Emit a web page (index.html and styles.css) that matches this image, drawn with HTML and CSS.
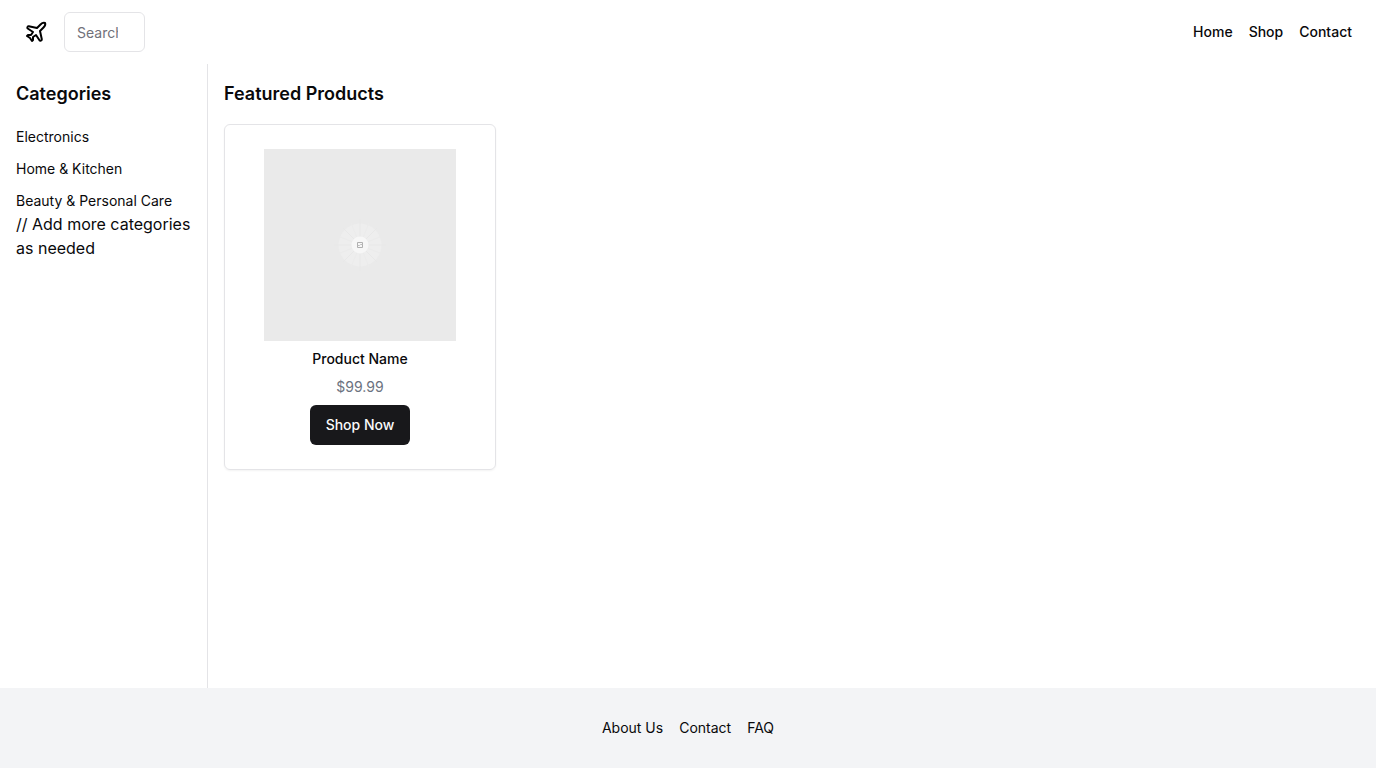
FILE: index.html
```html
<!DOCTYPE html>
<html lang="en">
<head>
  <meta charset="utf-8">
  <meta name="viewport" content="width=device-width, initial-scale=1">
  <title>Featured Products</title>
  <link rel="stylesheet" href="styles.css">
</head>
<body class="page">
  <header class="header">
    <div class="header-start">
      <a class="logo" href="#" aria-label="Store home">
        <svg class="logo-icon" viewBox="0 0 24 24" fill="none" stroke="currentColor" stroke-width="2" stroke-linecap="round" stroke-linejoin="round" aria-hidden="true">
          <path d="M17.8 19.2 16 11l3.5-3.5C21 6 21.5 4 21 3c-1-.5-3 0-4.5 1.5L13 8 4.8 6.2c-.5-.1-.9.1-1.1.5l-.3.5c-.2.5-.1 1 .3 1.3L9 12l-2 3H4l-1 1 3 2 2 3 1-1v-3l3-2 3.5 5.3c.3.4.8.5 1.3.3l.5-.2c.4-.3.6-.7.5-1.2z"/>
        </svg>
      </a>
      <input class="search" type="search" placeholder="Search..." aria-label="Search">
    </div>
    <nav class="nav" aria-label="Main">
      <a class="nav-link" href="#">Home</a>
      <a class="nav-link" href="#">Shop</a>
      <a class="nav-link" href="#">Contact</a>
    </nav>
  </header>

  <div class="body">
    <aside class="sidebar">
      <h2 class="heading">Categories</h2>
      <ul class="categories">
        <li><a class="link" href="#">Electronics</a></li>
        <li><a class="link" href="#">Home &amp; Kitchen</a></li>
        <li><a class="link" href="#">Beauty &amp; Personal Care</a></li>
      </ul>
      <p class="note">// Add more categories as needed</p>
    </aside>

    <main class="main">
      <h2 class="heading">Featured Products</h2>
      <div class="products">
        <article class="card">
          <svg class="card-image" viewBox="0 0 192 192" role="img" aria-label="Product image">
            <rect width="192" height="192" fill="#eaeaea"/>
            <circle cx="96" cy="96" r="21.500" fill="#eeeeee"/>
            <g fill="none" stroke="#e8e8e8" stroke-width="1">
              <path d="M70 96H122M96 70V122M79 79 113 113M113 79 79 113"/>
              <path d="M87 74 105 118M105 74 87 118M74 87 118 105M74 105 118 87" stroke="#ebebeb"/>
            </g>
            <circle cx="96" cy="96" r="8.500" fill="#f7f7f7"/>
            <g fill="none" stroke="#b0b0b0" stroke-width="1">
              <path d="M93.500 93.500H98.500V98.500H93.500Z"/>
              <path d="M93.500 96.500H95.500L96.500 95.500H98.500" stroke="#bdbdbd"/>
            </g>
          </svg>
          <h3 class="card-name">Product Name</h3>
          <p class="card-price">$99.99</p>
          <button class="button" type="button">Shop Now</button>
        </article>
      </div>
    </main>
  </div>

  <footer class="footer">
    <a class="link" href="#">About Us</a>
    <a class="link" href="#">Contact</a>
    <a class="link" href="#">FAQ</a>
  </footer>
</body>
</html>
```

FILE: styles.css
```css
*,
*::before,
*::after {
  box-sizing: border-box;
}

h2,
h3,
p,
ul {
  margin: 0;
  padding: 0;
}

.page {
  display: flex;
  flex-direction: column;
  min-height: 100vh;
  margin: 0;
  background: #fff;
  color: #09090b;
  font-family: Inter, "Liberation Sans", sans-serif;
  font-size: 16px;
  line-height: 24px;
}

.header {
  display: flex;
  align-items: center;
  justify-content: space-between;
  padding: 12px 24px;
}

.header-start {
  display: flex;
  align-items: center;
  gap: 16px;
}

.logo {
  display: flex;
  color: #000;
}

.logo-icon {
  width: 24px;
  height: 24px;
}

.search {
  width: 81px;
  height: 40px;
  margin: 0;
  padding: 8px 12px;
  border: 1px solid #e4e4e7;
  border-radius: 6px;
  background: #fff;
  color: inherit;
  font: 14px/20px Inter, "Liberation Sans", sans-serif;
  appearance: none;
}

.search::placeholder {
  color: #71717a;
}

.nav {
  display: flex;
  gap: 16px;
}

.nav-link {
  color: inherit;
  font-size: 14px;
  font-weight: 500;
  line-height: 20px;
  text-decoration: none;
}

.body {
  display: flex;
  flex: 1;
}

.sidebar {
  flex: none;
  width: 208px;
  padding: 16px;
  border-right: 1px solid #e4e4e7;
}

.heading {
  margin-bottom: 16px;
  font-size: 18px;
  font-weight: 600;
  line-height: 28px;
}

.categories {
  display: grid;
  gap: 8px;
  list-style: none;
}

.link {
  color: inherit;
  font-size: 14px;
  line-height: 20px;
  text-decoration: none;
}

.main {
  flex: 1;
  padding: 16px;
}

.products {
  display: grid;
  grid-template-columns: repeat(4, minmax(0, 1fr));
  gap: 16px;
}

.card {
  display: flex;
  flex-direction: column;
  align-items: center;
  gap: 8px;
  padding: 24px;
  border: 1px solid #e4e4e7;
  border-radius: 6px;
  box-shadow: 0 1px 2px rgba(0, 0, 0, 0.05);
}

.card-image {
  width: 192px;
  max-width: 100%;
}

.card-name {
  font-size: 14px;
  font-weight: 500;
  line-height: 20px;
}

.card-price {
  color: #6b7280;
  font-size: 14px;
  line-height: 20px;
}

.button {
  height: 40px;
  padding: 8px 16px;
  border: 0;
  border-radius: 6px;
  background: #18181b;
  color: #fafafa;
  font: 500 14px/20px Inter, "Liberation Sans", sans-serif;
  cursor: pointer;
}

.footer {
  display: flex;
  justify-content: center;
  gap: 16px;
  padding: 28px 24px;
  background: #f3f4f6;
}

.footer .link {
  line-height: 24px;
}
```
